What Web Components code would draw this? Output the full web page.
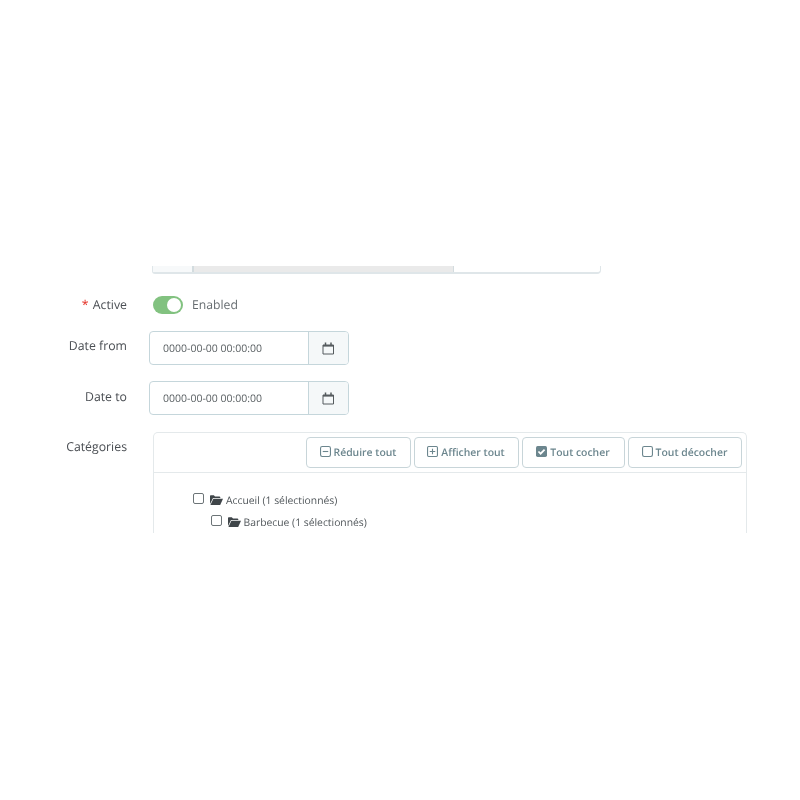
<!DOCTYPE html>
<html><head><meta charset="utf-8"><title>Form</title>
<style>
html,body{margin:0;background:#fff}
body{font-family:"Open Sans",sans-serif;color:#363a41;text-rendering:geometricPrecision}
</style></head><body>
<form-page>
  <top-remnant></top-remnant>
  <form-row label="Active" required top="22" pad="0"><switch-field>Enabled</switch-field></form-row>
  <form-row label="Date from" top="17" shift="-4" pad="6"><date-field value="0000-00-00 00:00:00"></date-field></form-row>
  <form-row label="Date to" top="16" shift="-4" pad="7"><date-field value="0000-00-00 00:00:00"></date-field></form-row>
  <form-row label="Catégories" top="17" pad="6">
    <tree-panel>
      <tool-btn slot="tools" icon="minus">Réduire tout</tool-btn>
      <tool-btn slot="tools" icon="plus">Afficher tout</tool-btn>
      <tool-btn slot="tools" icon="check">Tout cocher</tool-btn>
      <tool-btn slot="tools" icon="empty">Tout décocher</tool-btn>
      <tree-item>Accueil (1 sélectionnés)</tree-item>
      <tree-item indent>Barbecue (1 sélectionnés)</tree-item>
    </tree-panel>
  </form-row>
</form-page>
<script>
function def(name, css, html, init){
  customElements.define(name, class extends HTMLElement{
    connectedCallback(){
      if(this.shadowRoot) return;
      const r=this.attachShadow({mode:'open'});
      r.innerHTML='<style>'+css+'</style>'+(typeof html==='function'?html(this):html);
      if(init) init(this,r);
    }
  });
}
def('form-page',
 ':host{display:block;width:800px;height:800px;box-sizing:border-box;padding-top:266px}'+
 '.clip{height:267px;overflow:hidden;will-change:opacity;opacity:.999}',
 '<div class="clip"><slot></slot></div>');
def('top-remnant',
 ':host{display:flex;box-sizing:border-box;width:449px;height:8px;margin-left:152px;border:solid #dfe6e9;border-width:0 1px 2px 1px;border-bottom-left-radius:3px;border-bottom-right-radius:4px}'+
 '.a{width:39px;background:#f7f9fa;border-right:2px solid #d3dcdf;flex:none}.b{width:259px;background:#eaeaea;border-right:1px solid #d3dcdf;flex:none}',
 '<div class="a"></div><div class="b"></div>');
def('form-row',
 ':host{display:flex;align-items:flex-start}'+
 '.l{width:127px;flex:none;text-align:right;font-size:12.3px;line-height:18px;color:#4a4e53;box-sizing:border-box}'+
 '.s{color:#e5342a;margin-right:1px}.c{margin-left:26px;min-width:0}',
 h=>`<div class="l">${h.hasAttribute('required')?'<span class="s">*</span> ':''}${h.getAttribute('label')}</div><div class="c"><slot></slot></div>`,
 (h,r)=>{
   h.style.marginTop=(h.getAttribute('top')||0)+'px';
   r.querySelector('.c').style.marginLeft=(26+ +(h.getAttribute('shift')||0))+'px';
   r.querySelector('.l').style.paddingTop=(h.getAttribute('pad')||0)+'px';
 });
def('switch-field',
 ':host{display:flex;align-items:center;gap:9px;font-size:12.2px;line-height:18px;color:#666c70}'+
 '.t{display:block;width:30px;height:18px;border-radius:9px;background:#82c280;position:relative}'+
 '.k{position:absolute;right:2px;top:2px;width:14px;height:14px;border-radius:50%;background:#fff}',
 '<span class="t"><span class="k"></span></span><span><slot></slot></span>');
def('date-field',
 ':host{display:flex;box-sizing:border-box;width:200px;height:34px;border:1px solid #c5d6db;border-radius:4px;background:#fff}'+
 '.v{flex:1;padding-left:13px;font-size:10.5px;line-height:34px;height:32px;color:#5a6063}'+
 '.a{width:39px;flex:none;border-left:1px solid #c5d6db;background:#f5f8f9;border-radius:0 3px 3px 0;display:flex;align-items:center;justify-content:center}',
 h=>`<div class="v">${h.getAttribute('value')}</div><div class="a"><svg width="13" height="13" viewBox="0 0 13 13" fill="none"><path d="M1 3h10.500v9H1z" stroke="#555b5e" stroke-width="1"/><path d="M1 3h10.500v1.600H1z" fill="#555b5e"/><path d="M3.500 .5v2.500M9 .5v2.500" stroke="#555b5e" stroke-width="1.500"/></svg></div>`);
def('tree-panel',
 ':host{display:block;box-sizing:border-box;width:594px;height:120px;border:solid #e4e9eb;border-width:1px 1px 0 1px;border-radius:5px 5px 0 0}'+
 '.h{display:flex;justify-content:flex-end;gap:3px;box-sizing:border-box;height:40px;padding:4px 4px 0 0;border-bottom:1px solid #e4e9eb}'+
 '.b{padding-top:17px}',
 '<div class="h"><slot name="tools"></slot></div><div class="b"><slot></slot></div>');
const icons={
 minus:'<rect x=".5" y=".5" width="9" height="9" rx="1.500" stroke="#6c868e" fill="none"/><path d="M2.500 5h5" stroke="#6c868e"/>',
 plus:'<rect x=".5" y=".5" width="9" height="9" rx="1" stroke="#6c868e" fill="none"/><path d="M2.500 5h5M5 2.500v5" stroke="#6c868e"/>',
 check:'<rect x="0" y="0" width="10" height="10" rx="1.500" fill="#6c868e"/><path d="M2.200 5l2 2 3.600-3.800" stroke="#fff" stroke-width="1.600" fill="none"/>',
 empty:'<rect x=".5" y=".5" width="9" height="9" rx="1.500" stroke="#6c868e" fill="none"/>'
};
const widths={minus:105,plus:105,check:103,empty:114};
def('tool-btn',
 ':host{display:flex;align-items:center;justify-content:center;gap:3px;box-sizing:border-box;height:31px;border:1px solid #c8d5d9;border-radius:4px;font-size:10.4px;font-weight:600;color:#6c868e;background:#fff}'+
 'svg{margin-top:-2px;flex:none;margin-left:-1px}',
 h=>`<svg width="11" height="11" viewBox="0 0 10 10">${icons[h.getAttribute('icon')]}</svg><span><slot></slot></span>`,
 h=>{h.style.width=widths[h.getAttribute('icon')]+'px'});
def('tree-item',
 ':host{display:flex;align-items:center;height:22px;font-size:10.35px;color:#4f5559;padding-left:39px}'+
 ':host([indent]){padding-left:56.500px}'+
 '.c{width:9px;height:9px;border:1px solid #6c7477;border-radius:2px;flex:none;margin-right:6px;margin-top:-5px}'+
 'svg{flex:none;margin-right:3px;margin-top:-2px}',
 '<span class="c"></span><svg width="13" height="10" viewBox="0 0 13 10"><path d="M0 9V1.200C0 .6.4.2 1 .2h2.800l1.200 1.200h4.400c.5 0 .9.4.9.9V3H3L0 9z" fill="#3f4549"/><path d="M3.400 3.800H13L10.200 10H.4z" fill="#3f4549"/></svg><span><slot></slot></span>');
</script>
</body></html>
